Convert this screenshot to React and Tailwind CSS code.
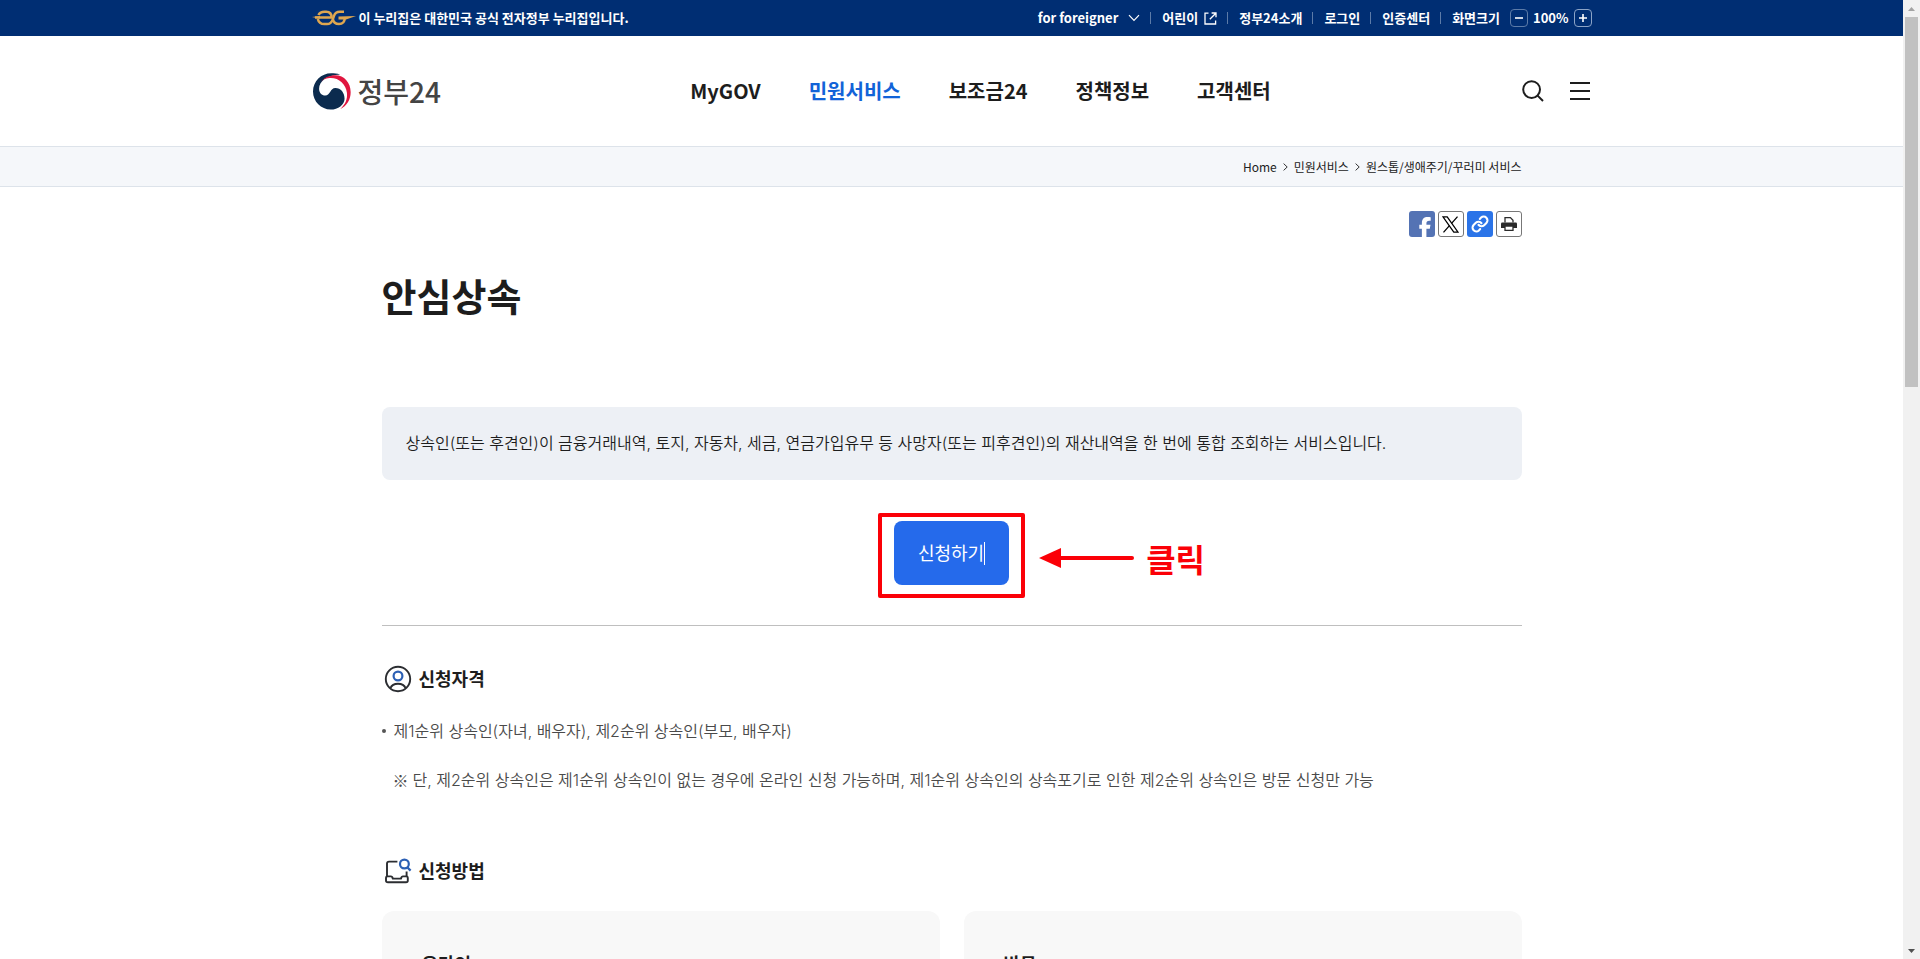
import React from "react";
import { FaFacebookF } from "react-icons/fa6";

const navItems = [
  { label: "MyGOV" },
  { label: "민원서비스", active: true },
  { label: "보조금24" },
  { label: "정책정보" },
  { label: "고객센터" },
];

const EgLogo = () => (
  <svg width="44" height="16" viewBox="0 0 44 16" fill="none" stroke="#dda650" strokeWidth="2.5">
    <path d="M3 7.6 H19.6 C19.6 3.6 17.6 1.7 14.2 1.7 H12.5 C9.6 1.7 7.4 3 6.4 5" />
    <path d="M5.8 9 C6.6 12.4 9 14.1 12.4 14.1 H15 C18.2 14.1 19.8 12 20.8 9.4 L22 5.8 C23 2.8 25 1.7 27.8 1.7 H32" />
    <path d="M20.8 9 C21.4 12.4 23.8 14.1 27 14.1 C30.6 14.1 32.6 12 32.8 8" />
    <path d="M26.5 6.4 L44 6 L34 9.4 H26.5 Z" fill="#dda650" stroke="none" />
    <path d="M0 7 L8 6 V8.8 Z" fill="#dda650" stroke="none" />
  </svg>
);

const GovMark = () => (
  <svg width="38" height="37" viewBox="0 0 112 108">
    <path
      fill="#0b2b4e"
      d="M80 4C70 0 62 0 54 0C24 0 0 24 0 54C0 84 24 107 52 107C74 107 93 93 93 75C93 58 82 44 66 44C50 44 52 66 36 66C26 66 18 58 18 46C18 24 40 6 80 4Z"
    />
    <path
      fill="#e0163f"
      d="M22 26C34 12 50 6 66 6C92 6 111 28 111 56C111 78 100 96 80 106C96 92 102 76 100 58C97 30 72 10 44 15C34 17 28 20 22 26Z"
    />
  </svg>
);

const Divider = () => <span className="mr-[11px] ml-[10px] h-[12px] w-px bg-[#5c7ba8]" />;

const TopBar = () => (
  <div className="bg-[#002e73] text-[13px] font-bold text-white">
    <div className="mx-auto flex h-9 max-w-[1280px] items-center justify-between">
      <div className="flex items-center gap-[3px]">
        <EgLogo />
        <span>이 누리집은 대한민국 공식 전자정부 누리집입니다.</span>
      </div>
      <div className="flex items-center">
        <button className="flex items-center gap-[10px]">
          for foreigner
          <svg width="12" height="8" viewBox="0 0 12 8" fill="none" stroke="currentColor" strokeWidth="1.2">
            <path d="M1 1.2 L6 6.4 L11 1.2" />
          </svg>
        </button>
        <Divider />
        <a href="#kids" className="flex items-center gap-[6px]">
          어린이
          <svg width="13" height="13" viewBox="0 0 13 13" fill="none" stroke="currentColor" strokeWidth="1.3">
            <path d="M4.5 1.2 H1 V12 H11.6 V8.4" />
            <path d="M7.6 1 H12 V5.2 M11.8 1.2 L5.8 7.2" />
          </svg>
        </a>
        <Divider />
        <a href="#about">정부24소개</a>
        <Divider />
        <a href="#login">로그인</a>
        <Divider />
        <a href="#cert">인증센터</a>
        <Divider />
        <span className="mr-[10px]">화면크기</span>
        <button
          aria-label="축소"
          className="flex size-[18px] items-center justify-center rounded border border-[#5c7ba8]"
        >
          <svg width="8" height="8" viewBox="0 0 8 8" stroke="currentColor" strokeWidth="1.6">
            <path d="M0 4 H8" />
          </svg>
        </button>
        <span className="mx-[5px]">100%</span>
        <button
          aria-label="확대"
          className="flex size-[18px] items-center justify-center rounded border border-[#8ba3c6]"
        >
          <svg width="8" height="8" viewBox="0 0 8 8" stroke="currentColor" strokeWidth="1.6">
            <path d="M0 4 H8 M4 0 V8" />
          </svg>
        </button>
      </div>
    </div>
  </div>
);

const Header = () => (
  <header className="mx-auto grid h-[110px] max-w-[1280px] grid-cols-[1fr_auto_1fr] items-center">
    <a href="#home" className="flex items-center gap-[7px] pl-px text-[28px] font-medium text-[#444]">
      <GovMark />
      정부24
    </a>
    <nav className="mr-[-58px] flex gap-12 text-[20px] font-bold text-[#1d1d1d]">
      {navItems.map((item) => (
        <a key={item.label} href="#nav" className={item.active ? "text-[#1263d8]" : ""}>
          {item.label}
        </a>
      ))}
    </nav>
    <div className="flex items-center justify-end gap-[26px] text-[#1d1d1d]">
      <button aria-label="검색">
        <svg width="22" height="22" viewBox="0 0 22 22" fill="none" stroke="currentColor" strokeWidth="2">
          <circle cx="9.6" cy="9.6" r="8.4" />
          <path d="M15.6 15.6 L21 21" />
        </svg>
      </button>
      <button aria-label="전체메뉴">
        <svg width="22" height="22" viewBox="0 0 22 22" fill="none" stroke="currentColor" strokeWidth="2">
          <path d="M0 3 H20 M0 11 H20 M0 19 H20" />
        </svg>
      </button>
    </div>
  </header>
);

const Chevron = () => (
  <svg width="5" height="8" viewBox="0 0 5 8" fill="none" stroke="#333" strokeWidth="1">
    <path d="M0.6 0.6 L4.2 4 L0.6 7.4" />
  </svg>
);

const Breadcrumb = () => (
  <div className="border-y border-[#dde3ea] bg-[#f5f7fa]">
    <div className="mx-auto flex h-[39px] max-w-[1140px] items-center justify-end gap-[6px] text-[12px] text-[#222]">
      <a href="#home">Home</a>
      <Chevron />
      <a href="#service">민원서비스</a>
      <Chevron />
      <span>원스톱/생애주기/꾸러미 서비스</span>
    </div>
  </div>
);

const ShareButtons = () => (
  <div className="flex justify-end gap-[3px]">
    <button
      aria-label="페이스북"
      className="flex size-[26px] items-end justify-end overflow-hidden rounded-[3px] bg-[#5473b4] text-[20px] text-white"
    >
      <FaFacebookF />
    </button>
    <button
      aria-label="X"
      className="flex size-[26px] items-center justify-center rounded-[3px] border border-[#777] text-black"
    >
      <svg width="17" height="17" viewBox="0 0 16 16" fill="none" stroke="currentColor" strokeWidth="1.2">
        <path d="M0.9 0.8 H4.9 L15.1 15.2 H11.1Z" />
        <path d="M14.6 0.6 L9 7 M7 9 L1.4 15.4" />
      </svg>
    </button>
    <button
      aria-label="링크 복사"
      className="flex size-[26px] items-center justify-center rounded-[3px] bg-[#2b74e8] text-white"
    >
      <svg width="18" height="18" viewBox="0 0 24 24" fill="none" stroke="currentColor" strokeWidth="2.8" strokeLinecap="round">
        <path d="M10 13a5 5 0 0 0 7.54.54l3-3a5 5 0 0 0-7.07-7.07l-1.72 1.71" />
        <path d="M14 11a5 5 0 0 0-7.54-.54l-3 3a5 5 0 0 0 7.07 7.07l1.71-1.71" />
      </svg>
    </button>
    <button
      aria-label="인쇄"
      className="flex size-[26px] items-center justify-center rounded-[3px] border border-[#777] text-[#2b2b2b]"
    >
      <svg width="16" height="16" viewBox="0 0 16 16">
        <path d="M4 6.6 V1.6 H9.4 L12 4.2 V6.6" fill="none" stroke="currentColor" strokeWidth="1.3" />
        <path d="M1.2 6.6 H14.8 Q16 6.6 16 7.8 V12 H0 V7.8 Q0 6.6 1.2 6.6Z" fill="currentColor" />
        <path d="M4 10 H12 V14.4 H4Z" fill="#fff" stroke="currentColor" strokeWidth="1.3" />
      </svg>
    </button>
  </div>
);

// Apply button with the red "click here" marking drawn over it
const ApplyButton = () => (
  <div className="mt-[41px] flex justify-center">
    <div className="relative">
      <button className="flex h-16 items-center rounded-lg bg-[#256aeb] px-6 text-[18px] text-white">
        신청하기
        <span className="h-[23px] w-px bg-white" />
      </button>
      <div className="pointer-events-none absolute -inset-x-4 -top-2 -bottom-[13px] rounded-[2px] border-4 border-[#fb0007]" />
      <div className="pointer-events-none absolute top-[13px] left-full ml-[30px] flex h-12 items-center gap-3 whitespace-nowrap font-['Noto_Sans_CJK_KR',sans-serif] text-[32px] leading-none font-bold text-[#fb0007]">
        <svg width="95" height="20" viewBox="0 0 95 20">
          <path d="M0 10 L22 0 V20Z" fill="currentColor" />
          <path d="M20 10 H93" stroke="currentColor" strokeWidth="4" strokeLinecap="round" />
        </svg>
        클릭
      </div>
    </div>
  </div>
);

const SectionTitle = ({ icon, children }) => (
  <h2 className="flex h-8 items-center gap-[7px] pl-[2px] text-[18px] font-bold text-[#1d1d1d]">
    {icon}
    {children}
  </h2>
);

const PersonIcon = () => (
  <svg width="28" height="28" viewBox="0 0 28 28" fill="none" stroke="#2b2d31" strokeWidth="1.9">
    <circle cx="14" cy="14" r="12.2" />
    <path d="M6.4 23.2 C7.6 20.2 10.4 18.8 14 18.8 C17.6 18.8 20.4 20.2 21.6 23.2" />
    <circle cx="14" cy="11" r="4.4" stroke="#2b5fb4" strokeWidth="2.2" />
  </svg>
);

const MethodIcon = () => (
  <svg width="28" height="28" viewBox="0 0 28 28" fill="none" stroke="#2b2d31" strokeWidth="1.9" strokeLinejoin="round">
    <path d="M13.4 4.6 H5 Q3 4.6 3 6.6 V19.4 M22.6 14.6 V19.4" />
    <path d="M3.4 19.4 H7 Q8 19.4 8.4 20.4 L8.8 21.6 H17 L17.4 20.4 Q17.8 19.4 18.8 19.4 H22.4 Q23.8 19.4 23.8 20.8 V23.4 Q23.8 25.2 22 25.2 H4 Q2 25.2 2 23.4 V20.8 Q2 19.4 3.4 19.4Z" />
    <g stroke="#2b5fb4" strokeWidth="2.2">
      <circle cx="20.4" cy="7" r="4.4" />
      <path d="M23.4 10.4 L26.6 13.6" />
    </g>
  </svg>
);

const Scrollbar = () => (
  <div className="flex w-[17px] shrink-0 flex-col items-center bg-[#f1f1f1]" aria-hidden="true">
    <svg width="17" height="17" viewBox="0 0 17 17" fill="#a3a3a3">
      <path d="M5 11 L8.5 7 L12 11Z" />
    </svg>
    <div className="min-h-0 w-[13px] flex-1">
      <div className="h-2/5 bg-[#c1c1c1]" />
    </div>
    <svg width="17" height="17" viewBox="0 0 17 17" fill="#505050">
      <path d="M5 7 L8.5 11 L12 7Z" />
    </svg>
  </div>
);

const App = () => {
  return (
    <div className="flex h-screen bg-white font-['Noto_Sans_CJK_KR',sans-serif]">
      <div className="flex-1 overflow-y-auto [scrollbar-width:none]">
        <TopBar />
        <Header />
        <Breadcrumb />

        <main className="mx-auto max-w-[1140px] pt-6 font-['Inter','Noto_Sans_CJK_KR',sans-serif]">
          <ShareButtons />
          <h1 className="mt-8 text-[38px] leading-[56px] font-bold text-[#1d1d1d]">안심상속</h1>

          <p className="mt-[82px] rounded-lg bg-[#edf0f5] px-6 pt-6 pb-[25px] text-[16px] leading-6 font-[350] text-[#1d1d1d]">
            상속인(또는 후견인)이 금융거래내역, 토지, 자동차, 세금, 연금가입유무 등 사망자(또는 피후견인)의 재산내역을 한 번에 통합
            조회하는 서비스입니다.
          </p>

          <ApplyButton />

          <hr className="mt-10 border-t border-[#bfbfbf]" />

          <section className="mt-[37px]">
            <SectionTitle icon={<PersonIcon />}>신청자격</SectionTitle>
            <ul className="mt-6 text-[16px] leading-6 font-[350] text-[#4a4a4a]">
              <li className="flex items-center gap-2">
                <span className="size-1 rounded-full bg-[#555]" />
                제1순위 상속인(자녀, 배우자), 제2순위 상속인(부모, 배우자)
              </li>
              <li className="mt-[25px] flex gap-1 pl-[11px]">
                <span className="font-['Noto_Sans_CJK_KR',sans-serif]">※</span>
                <span>
                  단, 제2순위 상속인은 제1순위 상속인이 없는 경우에 온라인 신청 가능하며, 제1순위 상속인의 상속포기로 인한
                  제2순위 상속인은 방문 신청만 가능
                </span>
              </li>
            </ul>
          </section>

          <section className="mt-[63px]">
            <SectionTitle icon={<MethodIcon />}>신청방법</SectionTitle>
            <div className="mt-6 grid grid-cols-2 gap-6">
              <div className="min-h-[200px] rounded-xl bg-[#f8f8f8] px-10 pt-10">
                <h3 className="text-[18px] leading-7 font-bold text-[#1d1d1d]">온라인</h3>
              </div>
              <div className="min-h-[200px] rounded-xl bg-[#f8f8f8] px-10 pt-10">
                <h3 className="text-[18px] leading-7 font-bold text-[#1d1d1d]">방문</h3>
              </div>
            </div>
          </section>
        </main>
      </div>
      <Scrollbar />
    </div>
  );
};

export default App;
